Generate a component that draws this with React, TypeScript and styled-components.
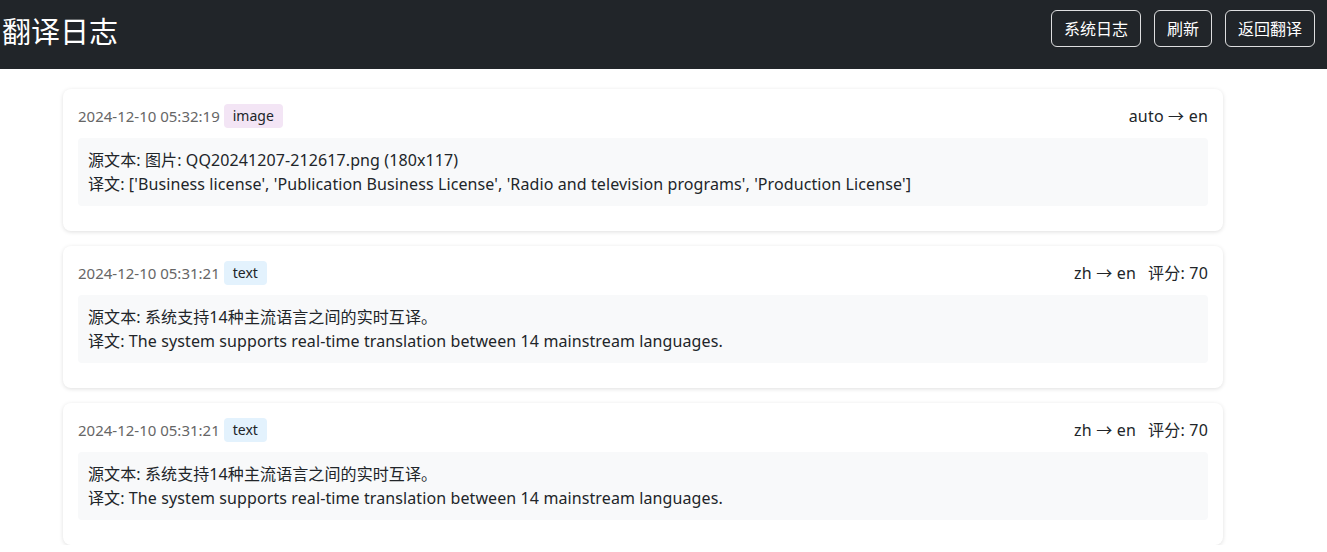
import React from "react";
import styled, { createGlobalStyle } from "styled-components";

const Global = createGlobalStyle`
  html, body { margin: 0; padding: 0; background: #fff; }
  body {
    font-family: "Noto Sans", "Noto Sans CJK SC", sans-serif;
    color: #212529;
  }
  * { box-sizing: border-box; }
`;

const Header = styled.header`
  background: #212529;
  height: 69px;
  display: flex;
  justify-content: space-between;
  align-items: flex-start;
  padding: 10px 12px 0 2px;
`;

const Title = styled.h1`
  margin: 0;
  font-size: 29px;
  font-weight: 400;
  line-height: 40px;
  color: #fff;
  font-family: "Noto Sans CJK SC", sans-serif;
`;

const Actions = styled.div`
  display: flex;
  gap: 13px;
`;

const NavButton = styled.button`
  background: transparent;
  border: 1px solid rgba(255, 255, 255, 0.85);
  border-radius: 6px;
  color: #fff;
  font-family: "Noto Sans CJK SC", sans-serif;
  font-size: 16px;
  line-height: 23px;
  padding: 6px 12px;
  cursor: pointer;
`;

const Main = styled.main`
  width: 1160px;
  margin: 20px 0 0 63px;
  display: flex;
  flex-direction: column;
  gap: 15.5px;
`;

const Card = styled.div`
  background: #fff;
  border-radius: 8px;
  box-shadow: 0 1px 4px rgba(0, 0, 0, 0.13);
  padding: 15px 15px 15px;
`;

const CardHead = styled.div`
  display: flex;
  justify-content: space-between;
  align-items: center;
  height: 23.5px;
  margin-bottom: 10px;
`;

const Meta = styled.div`
  display: flex;
  align-items: center;
  gap: 4px;
`;

const Time = styled.span`
  font-size: 15px;
  color: #666;
`;

const Badge = styled.span<{ $kind: "image" | "text" }>`
  font-size: 14px;
  line-height: 24px;
  padding: 0 9px;
  border-radius: 4px;
  color: #212529;
  background: ${(p) => (p.$kind === "image" ? "#f3e5f5" : "#e3f2fd")};
`;

const Lang = styled.div`
  font-size: 16px;
  line-height: 22px;
  display: flex;
  gap: 12px;
  letter-spacing: 0.2px;
`;

const Body = styled.div`
  background: #f8f9fa;
  border-radius: 4px;
  padding: 10px;
  margin-bottom: 10px;
  font-size: 16px;
  line-height: 24px;
  letter-spacing: 0.1px;
`;

type Entry = {
  time: string;
  kind: "image" | "text";
  lang: string;
  score?: number;
  source: string;
  target: string;
};

const entries: Entry[] = [
  {
    time: "2024-12-10 05:32:19",
    kind: "image",
    lang: "auto → en",
    source: "图片: QQ20241207-212617.png (180x117)",
    target:
      "['Business license', 'Publication Business License', 'Radio and television programs', 'Production License']",
  },
  {
    time: "2024-12-10 05:31:21",
    kind: "text",
    lang: "zh → en",
    score: 70,
    source: "系统支持14种主流语言之间的实时互译。",
    target: "The system supports real-time translation between 14 mainstream languages.",
  },
  {
    time: "2024-12-10 05:31:21",
    kind: "text",
    lang: "zh → en",
    score: 70,
    source: "系统支持14种主流语言之间的实时互译。",
    target: "The system supports real-time translation between 14 mainstream languages.",
  },
];

export default function App() {
  return (
    <>
      <Global />
      <Header>
        <Title>翻译日志</Title>
        <Actions>
          <NavButton>系统日志</NavButton>
          <NavButton>刷新</NavButton>
          <NavButton>返回翻译</NavButton>
        </Actions>
      </Header>
      <Main>
        {entries.map((e, i) => (
          <Card key={i}>
            <CardHead>
              <Meta>
                <Time>{e.time}</Time>
                <Badge $kind={e.kind}>{e.kind}</Badge>
              </Meta>
              <Lang>
                <span>{e.lang}</span>
                {e.score !== undefined && <span>评分: {e.score}</span>}
              </Lang>
            </CardHead>
            <Body>
              <div>源文本: {e.source}</div>
              <div>译文: {e.target}</div>
            </Body>
          </Card>
        ))}
      </Main>
    </>
  );
}
